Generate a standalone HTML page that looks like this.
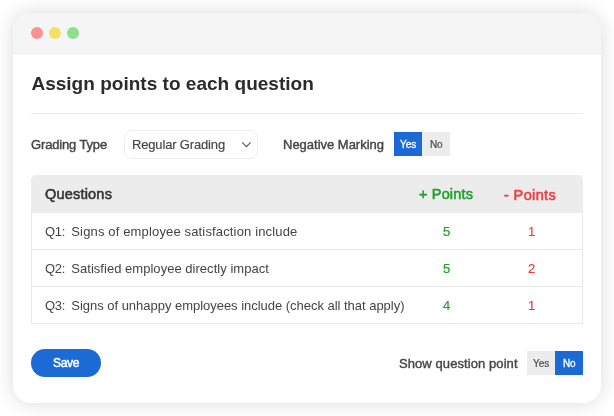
<!DOCTYPE html>
<html><head><meta charset="utf-8">
<style>
*{box-sizing:border-box;margin:0;padding:0}
html,body{width:614px;height:416px;background:#fff;overflow:hidden}
body{font-family:"Liberation Sans",sans-serif;color:#333;position:relative}
.win{position:absolute;left:13px;top:13px;width:588px;height:390px;border-radius:18px;background:#fff;box-shadow:0 0 20px rgba(0,0,0,.15);overflow:hidden;will-change:transform}
.bar{position:absolute;left:0;top:0;width:100%;height:41px;background:#f5f5f5;border-bottom:1px solid #eee}
.dot{position:absolute;top:14px;width:12px;height:12px;border-radius:50%}
.abs{position:absolute;white-space:nowrap;line-height:1}
.hr{position:absolute;left:18px;top:100px;width:552px;height:1px;background:#ececec}
.lbl{font-size:13px;color:#444;-webkit-text-stroke:0.4px #444}
.sel{position:absolute;left:111px;top:117px;width:134px;height:29px;border:1px solid #eee;border-radius:8px}
.tog{position:absolute;height:24px}
.on{background:#1b6ad6;color:#fff}
.off{background:#ececec;color:#4a4a4a}
.th{position:absolute;left:18px;top:162px;width:552px;height:38px;background:#ececec;border-radius:5px 5px 0 0}
.tb{position:absolute;left:18px;top:200px;width:552px;height:111px;border:1px solid #e8e8e8;border-top:none}
.row{position:absolute;left:0;width:550px;height:37px;border-bottom:1px solid #e8e8e8;font-size:13px;color:#444}
.g{color:#22a02b;-webkit-text-stroke:0.2px #22a02b}.r{color:#f43c3c;-webkit-text-stroke:0.2px #f43c3c}
.save{position:absolute;left:18px;top:336px;width:69.5px;height:28px;border-radius:14px;background:#1b6ad6;color:#fff}
</style></head><body>
<div class="win">
 <div class="bar">
  <div class="dot" style="left:18px;background:#fc9191"></div>
  <div class="dot" style="left:36px;background:#f5e066"></div>
  <div class="dot" style="left:54px;background:#8ee08b"></div>
 </div>
 <div id="title" class="abs" style="left:18.4px;top:61px;font-size:19px;font-weight:bold;color:#2b2b2b;letter-spacing:0.02px">Assign points to each question</div>
 <div class="hr"></div>
 <div id="grading" class="abs lbl" style="left:18px;top:125px;letter-spacing:-0.15px">Grading Type</div>
 <div class="sel">
  <div id="regular" class="abs" style="left:7px;top:7px;font-size:13px;color:#444;letter-spacing:-0.16px;-webkit-text-stroke:0.15px #444">Regular Grading</div>
  <svg style="position:absolute;left:116px;top:10px" width="11" height="8" viewBox="0 0 11 8"><path d="M1.2 1.3 L5.4 5.6 L9.6 1.3" fill="none" stroke="#555" stroke-width="1.1"/></svg>
 </div>
 <div id="neg" class="abs lbl" style="left:270px;top:125px;letter-spacing:-0.01px">Negative Marking</div>
 <div class="tog on" style="left:381px;top:119px;width:28px"><span id="yes1" class="abs" style="left:6px;top:8px;font-size:10px;letter-spacing:0px;-webkit-text-stroke:0.3px #fff">Yes</span></div>
 <div class="tog off" style="left:409px;top:119px;width:28px"><span id="no1" class="abs" style="left:8px;top:8px;font-size:10px;letter-spacing:-0.25px;-webkit-text-stroke:0.2px #4a4a4a">No</span></div>

 <div class="th">
  <div id="questions" class="abs" style="left:14px;top:12px;font-size:14.5px;color:#333;letter-spacing:0.2px;-webkit-text-stroke:0.55px #333">Questions</div>
  <div id="plus" class="abs g" style="left:388px;top:12px;font-size:14.5px;letter-spacing:0.16px;-webkit-text-stroke:0.55px #22a02b">+ Points</div>
  <div id="minus" class="abs r" style="left:473px;top:13px;font-size:14.5px;letter-spacing:0.37px;-webkit-text-stroke:0.55px #f43c3c">- Points</div>
 </div>
 <div class="tb">
  <div class="row" style="top:0"><span class="abs" style="left:13px;top:12px;letter-spacing:-0.25px">Q1:</span><span id="q1" class="abs" style="left:39.3px;top:12px;letter-spacing:0.15px">Signs of employee satisfaction include</span><span class="abs g" style="left:411px;top:12px">5</span><span class="abs r" style="left:496px;top:12px">1</span></div>
  <div class="row" style="top:37px"><span class="abs" style="left:13px;top:12px;letter-spacing:-0.25px">Q2:</span><span id="q2" class="abs" style="left:39.3px;top:12px;letter-spacing:0.03px">Satisfied employee directly impact</span><span class="abs g" style="left:411px;top:12px">5</span><span class="abs r" style="left:496px;top:12px">2</span></div>
  <div class="row" style="top:74px;border-bottom:none"><span class="abs" style="left:13px;top:12px;letter-spacing:-0.25px">Q3:</span><span id="q3" class="abs" style="left:39.3px;top:12px;letter-spacing:-0.025px">Signs of unhappy employees include (check all that apply)</span><span class="abs g" style="left:411px;top:12px">4</span><span class="abs r" style="left:496px;top:12px">1</span></div>
 </div>
 <div class="save"><span id="save" class="abs" style="left:22px;top:8px;font-size:12px;letter-spacing:-0.3px;-webkit-text-stroke:0.5px #fff">Save</span></div>
 <div id="show" class="abs lbl" style="left:386px;top:344px;letter-spacing:0.08px">Show question point</div>
 <div class="tog off" style="left:514px;top:338px;width:28px"><span id="yes2" class="abs" style="left:6px;top:8px;font-size:10px;letter-spacing:0px;-webkit-text-stroke:0.2px #4a4a4a">Yes</span></div>
 <div class="tog on" style="left:542px;top:338px;width:28px"><span id="no2" class="abs" style="left:8px;top:8px;font-size:10px;letter-spacing:-0.25px;-webkit-text-stroke:0.3px #fff">No</span></div>
</div>
</body></html>
